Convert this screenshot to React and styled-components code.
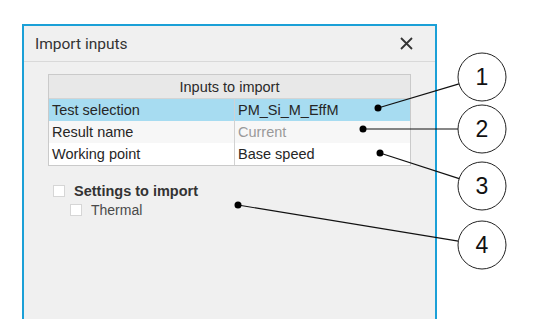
import React from 'react'
import styled, { createGlobalStyle } from 'styled-components'

const GlobalStyle = createGlobalStyle`
    html, body {
        margin: 0;
        padding: 0;
        background: #ffffff;
        font-family: 'Liberation Sans', Arial, sans-serif;
    }
`

const Page = styled.div`
    position: relative;
    width: 540px;
    height: 319px;
    overflow: hidden;
    padding: 24px 0 0 22px;
    box-sizing: border-box;
`

const Dialog = styled.section`
    width: 415px;
    height: 320px;
    box-sizing: border-box;
    border: 2px solid #1ba0d7;
    background: #f0f0f0;
    display: flex;
    flex-direction: column;
`

const TitleBar = styled.header`
    height: 35px;
    display: flex;
    align-items: center;
    justify-content: space-between;
    padding: 0 22px 0 11px;
    border-bottom: 1px solid #d9d9d9;
    h2 {
        margin: 0;
        font-family: Roboto, 'Liberation Sans', sans-serif;
        font-weight: 400;
        font-size: 15.5px;
        color: #333333;
    }
`

const CloseButton = styled.button`
    border: none;
    background: none;
    padding: 0;
    width: 13px;
    height: 13px;
    display: flex;
    cursor: pointer;
`

const Body = styled.div`
    padding: 12px 24px 0 24px;
`

const Table = styled.div`
    width: 363px;
    border: 1px solid #cacaca;
    box-sizing: border-box;
    background: #ffffff;
`

const HeaderRow = styled.div`
    height: 23px;
    display: flex;
    align-items: center;
    justify-content: center;
    background: #e8e8e8;
    border-bottom: 1px solid #d4d4d4;
    font-size: 14.5px;
    color: #2a2a2a;
`

const Row = styled.div`
    height: 22px;
    display: grid;
    grid-template-columns: 185px 1fr;
    background: ${p => p.$selected ? '#a7dcf1' : p.$alt ? '#f7f7f7' : '#ffffff'};
    font-size: 14.5px;
    color: #262626;
`

const Cell = styled.div`
    display: flex;
    align-items: center;
    padding-left: 3px;
    border-left: ${p => p.$value ? '1px solid #d2d2d2' : 'none'};
    color: ${p => p.$muted ? '#9a9a9a' : 'inherit'};
    white-space: nowrap;
`

const Settings = styled.div`
    margin-top: 16px;
    padding-left: 5px;
    display: flex;
    flex-direction: column;
    gap: 1px;
`

const CheckRow = styled.label`
    display: flex;
    align-items: center;
    gap: 9px;
    height: 18px;
    padding-left: ${p => p.$indent ? '17px' : '0'};
    font-size: ${p => p.$bold ? '14.5px' : '14px'};
    font-weight: ${p => p.$bold ? 700 : 400};
    color: ${p => p.$bold ? '#333333' : '#4a4a4a'};
`

const Box = styled.span`
    width: 12px;
    height: 12px;
    border: 1px solid #d6d6d6;
    background: #ffffff;
    box-sizing: border-box;
`

const Callouts = styled.svg`
    position: absolute;
    left: 0;
    top: 0;
    pointer-events: none;
`

const callouts = [
    { n: 1, dot: [378, 108], cy: 77 },
    { n: 2, dot: [363, 129], cy: 129 },
    { n: 3, dot: [380, 153], cy: 186 },
    { n: 4, dot: [238, 205], cy: 245 },
]

function Annotations() {
    const cx = 482
    const r = 24
    return (
        <Callouts width="540" height="319" viewBox="0 0 540 319">
            {callouts.map(c => {
                const [dx, dy] = c.dot
                const ang = Math.atan2(c.cy - dy, cx - dx)
                const ex = cx - r * Math.cos(ang)
                const ey = c.cy - r * Math.sin(ang)
                return (
                    <g key={c.n}>
                        <line x1={dx} y1={dy} x2={ex} y2={ey} stroke="#111" strokeWidth="1.1" />
                        <circle cx={dx} cy={dy} r="3.5" fill="#000" />
                        <circle cx={cx} cy={c.cy} r={r} fill="#fff" stroke="#222" strokeWidth="1" />
                        <text x={cx} y={c.cy + 8} textAnchor="middle" fontSize="23" fontFamily="'Liberation Sans', Arial, sans-serif" fill="#111">{c.n}</text>
                    </g>
                )
            })}
        </Callouts>
    )
}

const rows = [
    { name: 'Test selection', value: 'PM_Si_M_EffM', selected: true },
    { name: 'Result name', value: 'Current', alt: true, muted: true },
    { name: 'Working point', value: 'Base speed' },
]

function App() {
    return (
        <>
        <GlobalStyle />
        <Page>
            <Dialog>
                <TitleBar>
                    <h2>Import inputs</h2>
                    <CloseButton aria-label="Close">
                        <svg width="13" height="13" viewBox="0 0 13 13">
                            <path d="M1 1 L12 12 M12 1 L1 12" stroke="#333" strokeWidth="1.8" />
                        </svg>
                    </CloseButton>
                </TitleBar>
                <Body>
                    <Table>
                        <HeaderRow>Inputs to import</HeaderRow>
                        {rows.map(r => (
                            <Row key={r.name} $selected={r.selected} $alt={r.alt}>
                                <Cell>{r.name}</Cell>
                                <Cell $value $muted={r.muted}>{r.value}</Cell>
                            </Row>
                        ))}
                    </Table>
                    <Settings>
                        <CheckRow $bold><Box />Settings to import</CheckRow>
                        <CheckRow $indent><Box />Thermal</CheckRow>
                    </Settings>
                </Body>
            </Dialog>
            <Annotations />
        </Page>
        </>
    )
}

export default App
